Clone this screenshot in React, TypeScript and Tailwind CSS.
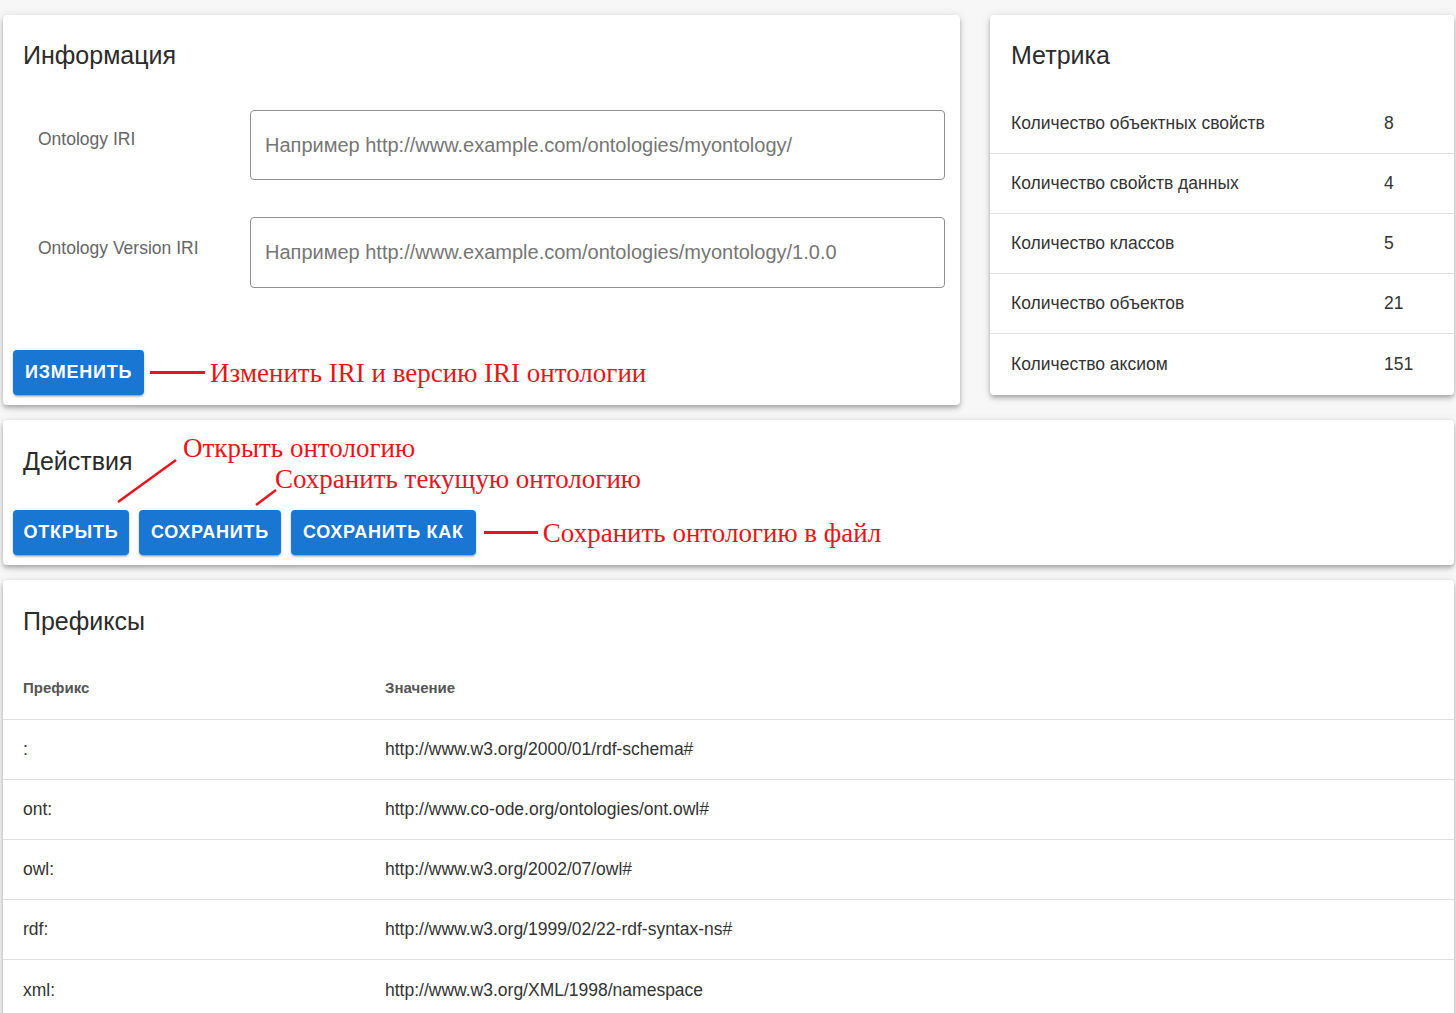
import React from "react";

const card = "bg-white rounded-[4px] shadow-[0_2px_4px_-1px_rgba(0,0,0,0.2),0_4px_5px_0_rgba(0,0,0,0.14),0_1px_10px_0_rgba(0,0,0,0.12)]";
const btn = "h-[45px] px-[12px] rounded-[4px] bg-[#1976d2] text-white text-[18px] font-bold tracking-[0.75px] uppercase shadow-[0_3px_1px_-2px_rgba(0,0,0,0.2),0_2px_2px_0_rgba(0,0,0,0.14),0_1px_5px_0_rgba(0,0,0,0.12)] flex items-center justify-center";
const note = "text-[#e8141c] text-[27px] leading-[30px] whitespace-nowrap [font-family:'Liberation_Serif','Times_New_Roman',serif]";

const metrics: [string, string][] = [
  ["Количество объектных свойств", "8"],
  ["Количество свойств данных", "4"],
  ["Количество классов", "5"],
  ["Количество объектов", "21"],
  ["Количество аксиом", "151"],
];

const prefixes: [string, string][] = [
  [":", "http://www.w3.org/2000/01/rdf-schema#"],
  ["ont:", "http://www.co-ode.org/ontologies/ont.owl#"],
  ["owl:", "http://www.w3.org/2002/07/owl#"],
  ["rdf:", "http://www.w3.org/1999/02/22-rdf-syntax-ns#"],
  ["xml:", "http://www.w3.org/XML/1998/namespace"],
];

export default function App() {
  return (
    <div className="min-h-[1013px] bg-[#f7f7f7] pt-[15px] pl-[3px] pr-[2px] text-[#333] [font-family:'Liberation_Sans',Arial,sans-serif]">
      <div className="grid grid-cols-[957px_464px] gap-x-[30px] items-start">
        {/* Информация */}
        <div className={`${card} h-[390px] flex flex-col`}>
          <div className="pt-[24px] pl-[20px] text-[25px] leading-[32px] text-[#2b2b2b]">Информация</div>
          <div className="mt-[39px] flex flex-col gap-[37px] pr-[15px]">
            <div className="flex">
              <div className="w-[247px] pl-[35px] pt-[17px] text-[17.5px] leading-[24px] text-[#666]">Ontology IRI</div>
              <input
                className="flex-1 h-[70px] border border-[#8f8f8f] rounded-[4px] px-[14px] text-[20px] outline-none placeholder:text-[#767676]"
                placeholder="Например http://www.example.com/ontologies/myontology/"
              />
            </div>
            <div className="flex">
              <div className="w-[247px] pl-[35px] pt-[19px] text-[17.5px] leading-[24px] text-[#666]">Ontology Version IRI</div>
              <input
                className="flex-1 h-[71px] border border-[#8f8f8f] rounded-[4px] px-[14px] text-[20px] outline-none placeholder:text-[#767676]"
                placeholder="Например http://www.example.com/ontologies/myontology/1.0.0"
              />
            </div>
          </div>
          <div className="mt-[62px] pl-[10px] flex items-center">
            <button className={btn}>Изменить</button>
            <div className="ml-[6px] w-[55px] h-[3px] bg-[#e8141c]" />
            <div className={`${note} ml-[5px]`}>Изменить IRI и версию IRI онтологии</div>
          </div>
        </div>

        {/* Метрика */}
        <div className={`${card} h-[380px] flex flex-col`}>
          <div className="pt-[24px] pl-[21px] text-[25px] leading-[32px] text-[#2b2b2b]">Метрика</div>
          <div className="mt-[23px] flex flex-col">
            {metrics.map(([k, v], i) => (
              <div
                key={k}
                className={`flex items-center h-[60px] pl-[21px] text-[17.5px] ${i < metrics.length - 1 ? "border-b border-[#e0e0e0]" : ""}`}
              >
                <div className="w-[373px]">{k}</div>
                <div>{v}</div>
              </div>
            ))}
          </div>
        </div>
      </div>

      {/* Действия */}
      <div className={`${card} relative mt-[15px] h-[145px] flex flex-col`}>
        <div className="pt-[25px] pl-[20px] text-[25px] leading-[32px] text-[#2b2b2b]">Действия</div>
        <div className="mt-[33px] pl-[10px] flex items-center gap-[10px]">
          <button className={`${btn} w-[116px]`}>Открыть</button>
          <button className={btn}>Сохранить</button>
          <button className={btn}>Сохранить как</button>
          <div className="ml-[-2px] w-[54px] h-[3px] bg-[#e8141c]" />
          <div className={`${note} ml-[-5px]`}>Сохранить онтологию в файл</div>
        </div>
        <div className={`${note} absolute left-[180px] top-[13px]`}>Открыть онтологию</div>
        <div className={`${note} absolute left-[272px] top-[44px]`}>Сохранить текущую онтологию</div>
        <svg className="absolute left-0 top-0 pointer-events-none" width="400" height="145">
          <line x1="115" y1="82" x2="173" y2="40" stroke="#e8141c" strokeWidth="2.5" />
          <line x1="253" y1="85" x2="273" y2="70" stroke="#e8141c" strokeWidth="2.5" />
        </svg>
      </div>

      {/* Префиксы */}
      <div className={`${card} mt-[15px] flex flex-col pb-[10px]`}>
        <div className="pt-[25px] pl-[20px] text-[25px] leading-[32px] text-[#2b2b2b]">Префиксы</div>
        <div className="mt-[20px] flex items-center h-[63px] border-b border-[#e0e0e0] text-[15px] font-bold text-[#555]">
          <div className="w-[382px] pl-[20px]">Префикс</div>
          <div>Значение</div>
        </div>
        {prefixes.map(([p, v], i) => (
          <div
            key={p}
            className={`flex items-center h-[60px] text-[17.5px] ${i < prefixes.length - 1 ? "border-b border-[#e0e0e0]" : ""}`}
          >
            <div className="w-[382px] pl-[20px]">{p}</div>
            <div>{v}</div>
          </div>
        ))}
      </div>
    </div>
  );
}
